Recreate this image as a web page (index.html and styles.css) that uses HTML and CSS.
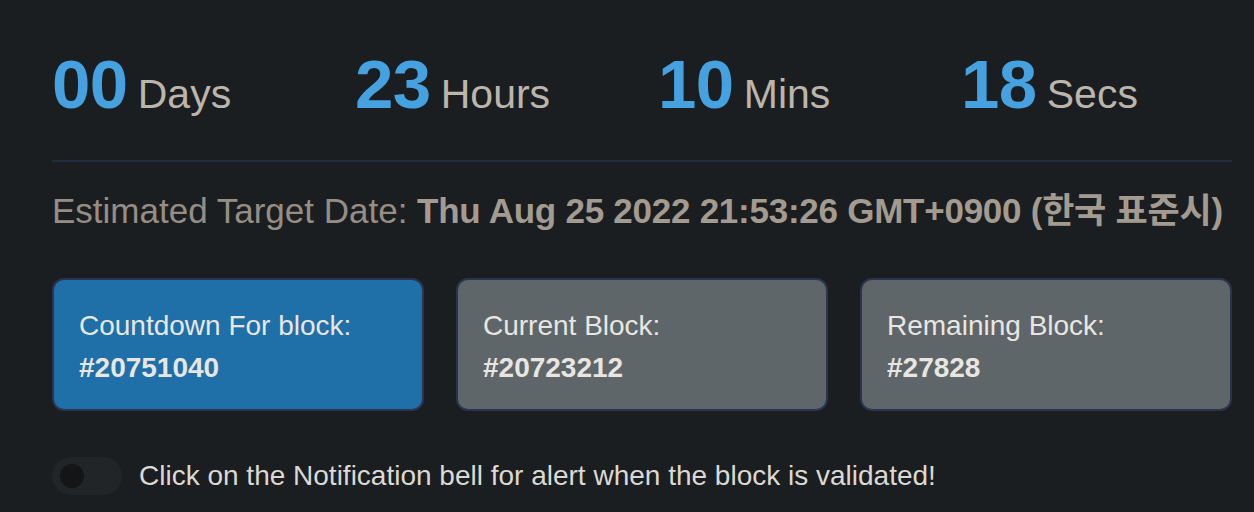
FILE: index.html
```html
<!DOCTYPE html>
<html>
<head>
<meta charset="utf-8">
<link rel="stylesheet" href="styles.css">
</head>
<body>
<main class="page">
  <section class="countdown">
    <div class="unit"><span class="num">00</span><span class="label">Days</span></div>
    <div class="unit"><span class="num">23</span><span class="label">Hours</span></div>
    <div class="unit"><span class="num">10</span><span class="label">Mins</span></div>
    <div class="unit"><span class="num">18</span><span class="label">Secs</span></div>
  </section>
  <p class="target">Estimated Target Date: <strong>Thu Aug 25 2022 21:53:26 GMT+0900 (한국 표준시)</strong></p>
  <section class="cards">
    <div class="card card-primary">
      <div class="card-title">Countdown For block:</div>
      <div class="card-value">#20751040</div>
    </div>
    <div class="card">
      <div class="card-title">Current Block:</div>
      <div class="card-value">#20723212</div>
    </div>
    <div class="card">
      <div class="card-title">Remaining Block:</div>
      <div class="card-value">#27828</div>
    </div>
  </section>
  <div class="notify">
    <span class="toggle"><span class="knob"></span></span>
    <span class="notify-text">Click on the Notification bell for alert when the block is validated!</span>
  </div>
</main>
</body>
</html>
```

FILE: styles.css
```css
html, body {
  margin: 0;
  padding: 0;
  background: #1b1e20;
  height: 100%;
  overflow: hidden;
}
body {
  font-family: "Liberation Sans", "Noto Sans CJK KR", Arial, sans-serif;
}
.page {
  width: 1180px;
  padding-left: 52px;
}
.countdown {
  display: grid;
  grid-template-columns: repeat(4, 303px);
  margin-top: 50px;
  padding-bottom: 41px;
  border-bottom: 2px solid #242b3c;
  width: 1180px;
}
.unit {
  display: flex;
  align-items: baseline;
  gap: 10px;
  line-height: 1;
}
.num {
  font-size: 69px;
  font-weight: 700;
  color: #45a1df;
  letter-spacing: -0.5px;
}
.label {
  font-size: 41px;
  color: #bcb5ab;
}
.target {
  margin: 28px 0 0;
  font-size: 35px;
  line-height: 41px;
  color: #968e85;
  white-space: nowrap;
}
.target strong {
  color: #a39b90;
  font-weight: 700;
  letter-spacing: -0.25px;
}
.cards {
  display: flex;
  gap: 32px;
  margin-top: 47px;
}
.card {
  box-sizing: border-box;
  width: 372px;
  height: 133px;
  padding: 25px 25px 20px;
  border: 2px solid #2a3350;
  border-radius: 12px;
  background: #5f6669;
  color: #e9e6e2;
  font-size: 28px;
  line-height: 42px;
}
.card-primary {
  background: #1f6fa8;
}
.card-value {
  font-weight: 700;
}
.notify {
  display: flex;
  align-items: center;
  gap: 17px;
  margin-top: 46px;
}
.toggle {
  display: flex;
  align-items: center;
  width: 70px;
  height: 38px;
  border-radius: 19px;
  background: #222527;
  padding-left: 8px;
  box-sizing: border-box;
}
.knob {
  width: 24px;
  height: 24px;
  border-radius: 50%;
  background: #131517;
}
.notify-text {
  font-size: 28px;
  line-height: 38px;
  color: #dcd8d2;
}
```
